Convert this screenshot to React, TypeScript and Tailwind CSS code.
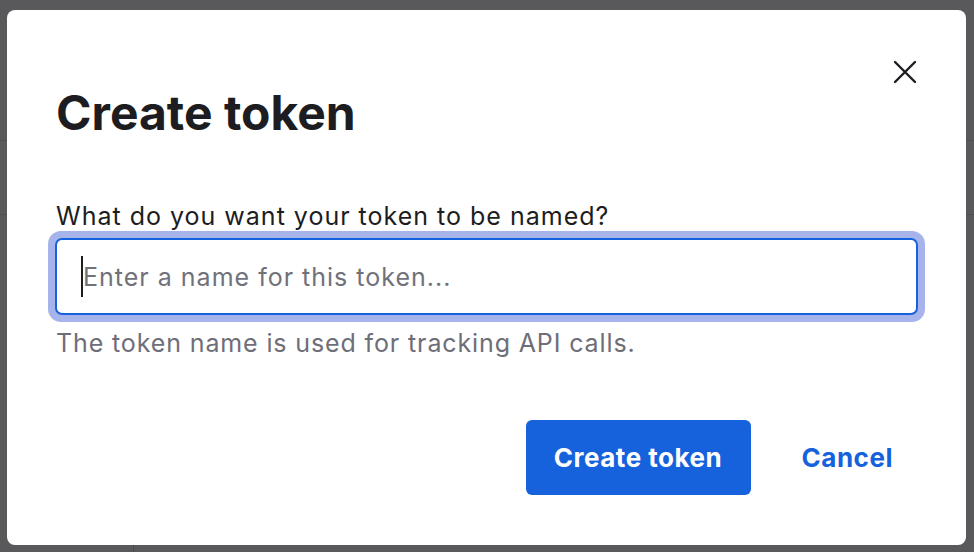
import React from 'react';

const App: React.FC = () => {
    return (
        <main className="relative w-[974px] h-[552px] overflow-hidden bg-[#59595b] font-['Inter',sans-serif]">
            {/* faint page content behind the overlay */}
            <div className="absolute inset-0 pointer-events-none">
                <div className="absolute left-0 top-[140px] w-full h-px bg-[#4f4f52]" />
                <div className="absolute left-0 top-[214px] w-full h-px bg-[#4f4f52]" />
                <div className="absolute left-[133px] top-[530px] w-px h-[22px] bg-[#4a4a4d]" />
            </div>

            <div className="relative ml-[7px] mt-[10px] w-[959px] h-[535px] bg-white rounded-[8px] px-[49px] flex flex-col">
                <button className="absolute right-[49px] top-[50px] w-[24px] h-[24px] flex items-center justify-center text-[#1d1d21]">
                    <svg viewBox="0 0 24 24" className="w-[24px] h-[24px]" fill="none" stroke="currentColor" strokeWidth="2.4" strokeLinecap="round">
                        <path d="M2 2l20 20M22 2L2 22" />
                    </svg>
                </button>

                <h2 className="mt-[75px] text-[48px] leading-[56px] font-bold text-[#1d1d21]">Create token</h2>

                <label className="mt-[59px] text-[25px] leading-[32px] tracking-[0.04em] text-[#1d1d21]">What do you want your token to be named?</label>

                <div className="-mt-[1px] -mx-[8px] rounded-[13px] bg-[#a7b4ec] p-[7px]">
                    <div className="h-[77px] rounded-[7px] border-2 border-[#1662dd] bg-white flex items-center pl-[24px]">
                        <span className="w-[2px] h-[41px] bg-[#1d1d21]" />
                        <span className="pt-[3px] text-[25px] tracking-[0.04em] text-[#71717a]">Enter a name for this token...</span>
                    </div>
                </div>

                <p className="mt-[5px] text-[25px] leading-[32px] tracking-[0.035em] text-[#6e6e78]">The token name is used for tracking API calls.</p>

                <div className="mt-[61px] flex items-center justify-end gap-[51px] pr-[24px]">
                    <button className="w-[225px] h-[75px] rounded-[6px] bg-[#1662dd] text-white text-[26px] tracking-[0.02em] font-bold">Create token</button>
                    <button className="text-[#1662dd] text-[26px] tracking-[0.02em] font-bold">Cancel</button>
                </div>
            </div>
        </main>
    );
};

export default App;
